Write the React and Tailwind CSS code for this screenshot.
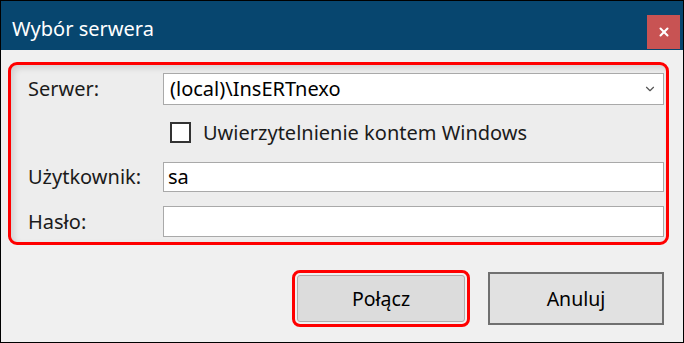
import { ChevronDown, X } from 'lucide-react'

const font = { fontFamily: '"Noto Sans", "Open Sans", sans-serif' }

// ── Text input row ──────────────────────────────────────────────────────────
function Row({ label, value, className }) {
  return (
    <div className={`flex items-center ${className}`}>
      <div className="w-[152px] pl-[17px] text-[20px] text-[#1b1b1b]">{label}</div>
      <div className="flex-1 h-full bg-white border border-[#a9a9a9] flex items-center px-[4px] text-[20px] text-black">
        {value}
      </div>
    </div>
  )
}

export default function App() {
  return (
    <div className="w-[684px] h-[343px] border border-black bg-[#f0f0f0] flex flex-col overflow-hidden leading-none" style={font}>
      {/* Title bar */}
      <div className="h-[49px] bg-[#07466f] flex items-start justify-between flex-shrink-0">
        <span className="text-white text-[20px] pl-[11px] pt-[18px]">Wybór serwera</span>
        <div className="mt-[14px] mr-[3px] w-[33px] h-[34px] bg-[#c85353] flex items-center justify-center">
          <X size={14} strokeWidth={3.5} className="text-white" />
        </div>
      </div>

      {/* Form frame */}
      <div className="mt-[12px] ml-[7px] w-[661px] h-[183px] border-[3px] border-[#ff0000] rounded-[9px] shadow-[inset_3px_3px_6px_rgba(0,0,0,0.12)] bg-[#ededed] flex flex-col pr-[2px]">
        <div className="flex items-center h-[32px] mt-[8px]">
          <div className="w-[152px] pl-[17px] text-[20px] text-[#1b1b1b]">Serwer:</div>
          <div className="flex-1 h-full bg-white border border-[#a9a9a9] flex items-center justify-between pl-[6px] pr-[6px] text-[20px] text-black">
            <span>(local)\InsERTnexo</span>
            <ChevronDown size={14} className="text-[#555]" />
          </div>
        </div>
        <div className="flex items-center h-[27px] mt-[14px] pl-[159px]">
          <div className="w-[21px] h-[21px] border-2 border-[#333] bg-white" />
          <span className="ml-[12px] text-[20px] text-[#1b1b1b]">Uwierzytelnienie kontem Windows</span>
        </div>
        <Row label="Użytkownik:" value="sa" className="h-[30px] mt-[16px]" />
        <Row label="Hasło:" value="" className="h-[31px] mt-[14px]" />
      </div>

      {/* Buttons */}
      <div className="flex items-center justify-end mt-[25px] pr-[19px] gap-[18px]">
        <div className="w-[178px] h-[57px] border-[3px] border-[#ff0000] rounded-[8px] p-[2px]">
          <div className="w-full h-full bg-[#dcdcdc] border border-[#adadad] rounded-[3px] flex items-center justify-center text-[19.5px] text-black">
            Połącz
          </div>
        </div>
        <div className="w-[176px] h-[53px] border-2 border-[#707070] bg-[#e1e1e1] flex items-center justify-center text-[19.5px] text-black">
          Anuluj
        </div>
      </div>
    </div>
  )
}
